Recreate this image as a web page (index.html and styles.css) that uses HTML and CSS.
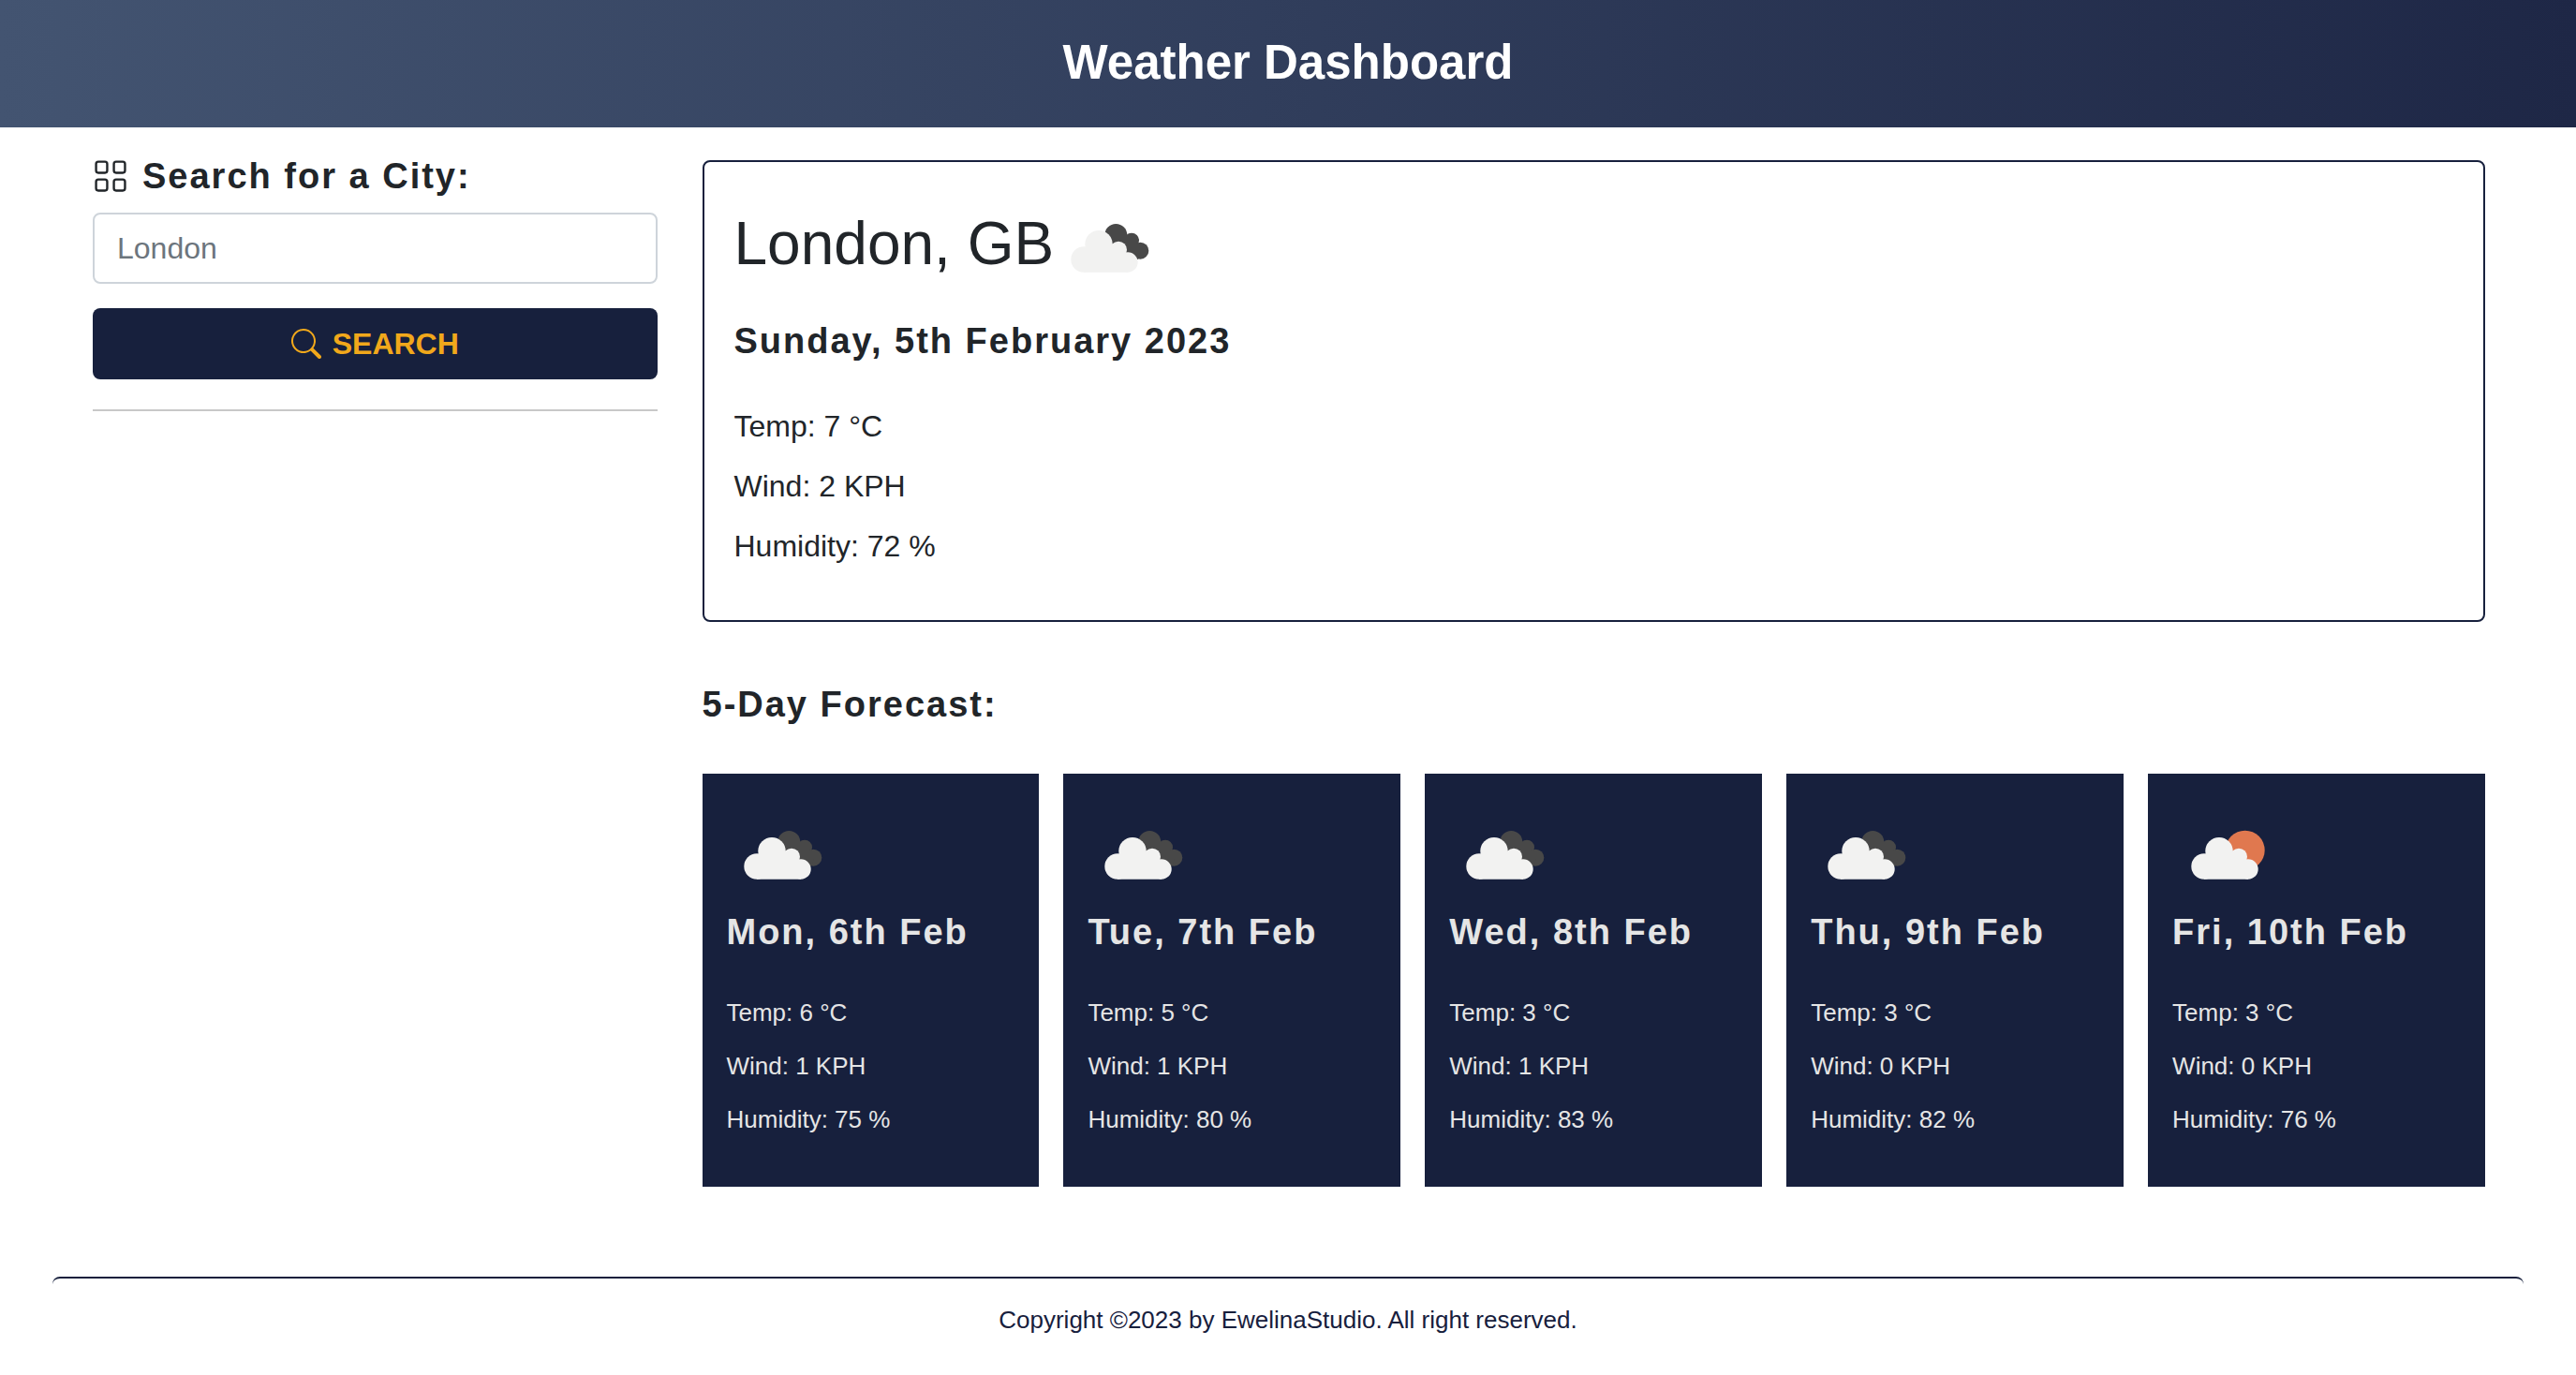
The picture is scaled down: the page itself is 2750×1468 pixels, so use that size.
FILE: index.html
```html
<!DOCTYPE html>
<html lang="en">
<head>
<meta charset="utf-8">
<meta name="viewport" content="width=device-width, initial-scale=1">
<title>Weather Dashboard</title>
<link rel="stylesheet" href="styles.css">
</head>
<body>
<svg class="sprite" aria-hidden="true">
  <symbol id="white-cloud" viewBox="0 0 102 100">
    <circle cx="32" cy="62" r="13.700"/>
    <circle cx="48" cy="45.700" r="14.700"/>
    <circle cx="69" cy="51.700" r="9"/>
    <circle cx="79" cy="65" r="10.700"/>
    <path d="M32 51h36v4h11v20.700H32z"/>
  </symbol>
  <symbol id="clouds" viewBox="0 0 102 100">
    <g fill="#484848">
      <circle cx="66.300" cy="36" r="12"/>
      <circle cx="83" cy="41.700" r="8"/>
      <circle cx="92.300" cy="52.700" r="9"/>
      <path d="M60 36h17l6 4 8 6 2 8-3 8-24-6z"/>
    </g>
    <use href="#white-cloud" width="102" height="100" fill="#f2f2f1"/>
  </symbol>
  <symbol id="sun-cloud" viewBox="0 0 102 100">
    <circle cx="77.700" cy="44.700" r="21" fill="#e0784f"/>
    <use href="#white-cloud" x="2" width="102" height="100" fill="#f2f2f1"/>
  </symbol>
</svg>

<header class="page-header">
  <h1 class="page-title">Weather Dashboard</h1>
</header>

<main class="layout">
  <aside class="sidebar">
    <form class="search-form">
      <label class="heading search-label" for="city">
        <svg class="label-icon" viewBox="0 0 16 16" fill="none" stroke="currentColor" aria-hidden="true">
          <rect x="1.500" y="1.500" width="5" height="5" rx="1"/>
          <rect x="9.500" y="1.500" width="5" height="5" rx="1"/>
          <rect x="1.500" y="9.500" width="5" height="5" rx="1"/>
          <rect x="9.500" y="9.500" width="5" height="5" rx="1"/>
        </svg>
        Search for a City:
      </label>
      <input class="search-input" id="city" type="text" placeholder="London">
      <button class="search-button" type="submit">
        <svg class="button-icon" viewBox="0 0 16 16" fill="currentColor" aria-hidden="true">
          <path d="M11.742 10.344a6.500 6.500 0 1 0-1.397 1.398h-.001c.03.04.062.078.098.115l3.850 3.850a1 1 0 0 0 1.415-1.414l-3.850-3.850a1.007 1.007 0 0 0-.115-.1zM12 6.500a5.500 5.500 0 1 1-11 0 5.500 5.500 0 0 1 11 0z"/>
        </svg>
        SEARCH
      </button>
    </form>
    <hr class="divider">
  </aside>

  <div class="content">
    <section class="today">
      <h2 class="city">London, GB<svg class="weather-icon" role="img" aria-label="Broken clouds"><use href="#clouds"/></svg></h2>
      <h3 class="heading">Sunday, 5th February 2023</h3>
      <p class="reading">Temp: 7 °C</p>
      <p class="reading">Wind: 2 KPH</p>
      <p class="reading">Humidity: 72 %</p>
    </section>

    <section class="forecast">
      <h3 class="heading">5-Day Forecast:</h3>
      <div class="days">
        <article class="day">
          <svg class="weather-icon" role="img" aria-label="Broken clouds"><use href="#clouds"/></svg>
          <h4 class="heading">Mon, 6th Feb</h4>
          <p class="day-reading">Temp: 6 °C</p>
          <p class="day-reading">Wind: 1 KPH</p>
          <p class="day-reading">Humidity: 75 %</p>
        </article>
        <article class="day">
          <svg class="weather-icon" role="img" aria-label="Broken clouds"><use href="#clouds"/></svg>
          <h4 class="heading">Tue, 7th Feb</h4>
          <p class="day-reading">Temp: 5 °C</p>
          <p class="day-reading">Wind: 1 KPH</p>
          <p class="day-reading">Humidity: 80 %</p>
        </article>
        <article class="day">
          <svg class="weather-icon" role="img" aria-label="Broken clouds"><use href="#clouds"/></svg>
          <h4 class="heading">Wed, 8th Feb</h4>
          <p class="day-reading">Temp: 3 °C</p>
          <p class="day-reading">Wind: 1 KPH</p>
          <p class="day-reading">Humidity: 83 %</p>
        </article>
        <article class="day">
          <svg class="weather-icon" role="img" aria-label="Broken clouds"><use href="#clouds"/></svg>
          <h4 class="heading">Thu, 9th Feb</h4>
          <p class="day-reading">Temp: 3 °C</p>
          <p class="day-reading">Wind: 0 KPH</p>
          <p class="day-reading">Humidity: 82 %</p>
        </article>
        <article class="day">
          <svg class="weather-icon" role="img" aria-label="Sun behind cloud"><use href="#sun-cloud"/></svg>
          <h4 class="heading">Fri, 10th Feb</h4>
          <p class="day-reading">Temp: 3 °C</p>
          <p class="day-reading">Wind: 0 KPH</p>
          <p class="day-reading">Humidity: 76 %</p>
        </article>
      </div>
    </section>
  </div>
</main>

<footer class="page-footer">
  <p class="copyright">Copyright ©2023 by EwelinaStudio. All right reserved.</p>
</footer>
</body>
</html>
```
FILE: styles.css
```css
:root {
  --navy: #17203d;
  --amber: #f1a81b;
  --ink: #212529;
  --pale: #e5e5e5;
}

*, *::before, *::after { box-sizing: border-box; }

body {
  margin: 0;
  background: #fff;
  color: var(--ink);
  font-family: "Liberation Sans", Arial, Helvetica, sans-serif;
  font-size: 32px;
  line-height: 48px;
}

h1, h2, h3, h4, p { margin: 0; }

.sprite {
  position: absolute;
  width: 0;
  height: 0;
}

.page-header {
  padding: 35px 24px 37px;
  background: linear-gradient(to right, #435471, #1e2746);
  color: #fff;
  text-align: center;
}

.page-title {
  font-size: 51px;
  line-height: 64px;
}

.layout {
  display: flex;
  padding: 0 73px 0 75px;
}

.sidebar {
  flex: 0 0 25%;
  padding: 28px 24px 0;
}

.content {
  flex: 1;
  min-width: 0;
  padding: 35px 24px 0;
}

.heading {
  font-size: 38px;
  font-weight: 700;
  line-height: 48px;
  letter-spacing: 2px;
}

.search-form {
  display: flex;
  flex-direction: column;
}

.search-label {
  display: flex;
  align-items: center;
  gap: 15px;
  margin-bottom: 15px;
}

.label-icon {
  width: 38px;
  height: 38px;
}

.search-input {
  width: 100%;
  margin-bottom: 26px;
  padding: 12px 24px;
  border: 2px solid #ced4da;
  border-radius: 8px;
  background: #fff;
  color: var(--ink);
  font: inherit;
}

.search-input::placeholder {
  color: #6c757d;
  opacity: 1;
}

.search-button {
  display: flex;
  align-items: center;
  justify-content: center;
  gap: 12px;
  padding: 14px 24px;
  border: 0;
  border-radius: 8px;
  background: var(--navy);
  color: var(--amber);
  font: inherit;
  font-weight: 700;
}

.button-icon {
  width: 32px;
  height: 32px;
}

.divider {
  margin: 32px 0 0;
  border: 0;
  border-top: 2px solid #c8c8c8;
}

.weather-icon {
  display: block;
  flex: none;
  width: 102px;
  height: 100px;
}

.today {
  padding: 42px 32px 55px;
  border: 2px solid var(--navy);
  border-radius: 8px;
}

.city {
  display: flex;
  margin-bottom: 25px;
  font-size: 64px;
  font-weight: 400;
  line-height: 90px;
}

.today .heading { margin-bottom: 43px; }

.reading + .reading { margin-top: 16px; }

.forecast { padding-top: 64px; }

.forecast > .heading { margin-bottom: 50px; }

.days {
  display: grid;
  grid-template-columns: repeat(5, minmax(0, 1fr));
  gap: 26px;
}

.day {
  padding: 37px 26px 53px;
  background: var(--navy);
  color: var(--pale);
}

.day .heading { margin: 8px 0 43px; }

.day-reading {
  font-size: 26px;
  line-height: 38px;
}

.day-reading + .day-reading { margin-top: 19px; }

.page-footer {
  margin: 96px 56px 0;
  padding: 25px 0 40px;
  border-top: 2px solid var(--navy);
  border-radius: 8px;
  color: var(--navy);
  text-align: center;
}

.copyright {
  font-size: 26px;
  line-height: 38px;
}
```
